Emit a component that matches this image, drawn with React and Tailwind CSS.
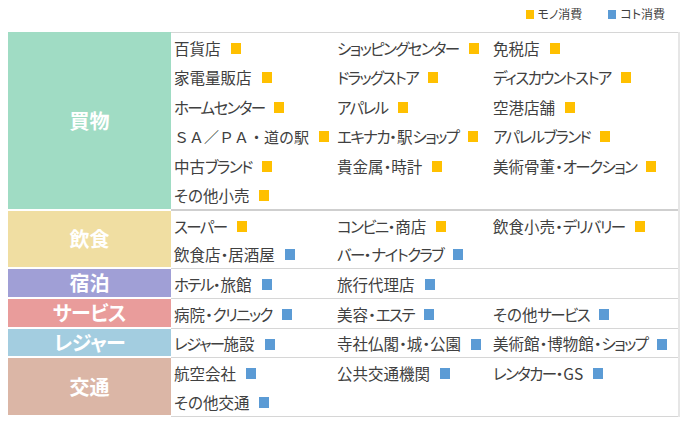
const Y = "bg-[#ffc000]";
const B = "bg-[#5b9bd5]";

const rows = [
  {
    label: "買物",
    color: "bg-[#a0dcc4]",
    h: "h-[179px]",
    line: "h-[29.5px]",
    border: "border-b-2 border-[#cfcfcf]",
    items: [
      ["百貨店", Y], ["ショッピングセンター", Y], ["免税店", Y],
      ["家電量販店", Y], ["ドラッグストア", Y], ["ディスカウントストア", Y],
      ["ホームセンター", Y], ["アパレル", Y], ["空港店舗", Y],
      ["ＳＡ／ＰＡ・道の駅", Y], ["エキナカ・駅ショップ", Y], ["アパレルブランド", Y],
      ["中古ブランド", Y], ["貴金属・時計", Y], ["美術骨董・オークション", Y],
      ["その他小売", Y],
    ],
  },
  {
    label: "飲食",
    color: "bg-[#f0dea2]",
    h: "h-[58px]",
    line: "h-[28.5px]",
    border: "border-b border-[#d6d6d6]",
    items: [
      ["スーパー", Y], ["コンビニ・商店", Y], ["飲食小売・デリバリー", Y],
      ["飲食店・居酒屋", B], ["バー・ナイトクラブ", B],
    ],
  },
  {
    label: "宿泊",
    color: "bg-[#a09fd6]",
    h: "h-[30px]",
    line: "h-[28px]",
    border: "border-b border-[#d6d6d6]",
    items: [["ホテル・旅館", B], ["旅行代理店", B]],
  },
  {
    label: "サービス",
    color: "bg-[#e99c9b]",
    h: "h-[30px]",
    line: "h-[28px]",
    border: "border-b border-[#d6d6d6]",
    items: [["病院・クリニック", B], ["美容・エステ", B], ["その他サービス", B]],
  },
  {
    label: "レジャー",
    color: "bg-[#a3cde0]",
    h: "h-[29px]",
    line: "h-[28px]",
    border: "border-b border-[#d6d6d6]",
    items: [["レジャー施設", B], ["寺社仏閣・城・公園", B], ["美術館・博物館・ショップ", B]],
  },
  {
    label: "交通",
    color: "bg-[#dbb6a6]",
    h: "h-[59px]",
    line: "h-[29px]",
    border: "border-b border-[#d6d6d6]",
    items: [["航空会社", B], ["公共交通機関", B], ["レンタカー・GS", B], ["その他交通", B]],
  },
];

const KANA = /([\u30A1-\u30FA\u30FC]+)/;

// katakana runs are set tighter, like the narrow kana of the original font
function Text({ text, tight = "tracking-[-1.6px]" }) {
  const parts = text.split(KANA).filter(Boolean);
  return (
    <span>
      {parts.map((p, i) =>
        /^[\u30A1-\u30FA\u30FC]+$/.test(p) ? (
          <span key={i} className={tight}>{p}</span>
        ) : (
          <span key={i}>{p}</span>
        )
      )}
    </span>
  );
}

function Item({ text, sq, line }) {
  const full = text.startsWith("ＳＡ");
  return (
    <div className={`${line} flex items-center pl-[3px] pt-[2px] whitespace-nowrap`}>
      {full ? (
        <span className="[font-feature-settings:normal] text-[15px]">{text}</span>
      ) : (
        <Text text={text} />
      )}
      <span className={`inline-block w-[10px] h-[11px] ml-[10px] ${sq}`} />
    </div>
  );
}

export default function App() {
  return (
    <div
      className="w-[695px] h-[422px] bg-white text-[#404040] [font-feature-settings:'palt'] overflow-hidden"
      style={{ fontFamily: '"Noto Sans CJK JP", "Noto Sans", sans-serif' }}
    >
      {/* legend */}
      <div className="h-[32px] flex items-center justify-end pr-[30px] pb-[4px] text-[12px] gap-[26px]">
        <div className="flex items-center gap-[4px]">
          <span className={`w-[8px] h-[9px] ${Y}`} />
          <span>モノ消費</span>
        </div>
        <div className="flex items-center gap-[4px]">
          <span className={`w-[8px] h-[9px] ${B}`} />
          <span>コト消費</span>
        </div>
      </div>

      {/* table */}
      <div className="ml-[8px] w-[672px] border-r-2 border-[#e6e6e6]">
        {rows.map((r, i) => (
          <div key={r.label} className={`flex ${r.h}`}>
            <div
              className={`w-[163px] shrink-0 border-b-2 border-white ${r.color} flex items-center justify-center text-white font-bold text-[20px]`}
            >
              <Text text={r.label} tight="tracking-[-0.5px]" />
            </div>
            <div
              className={`flex-1 ${r.border} ${i === 0 ? "border-t border-t-[#d6d6d6]" : ""} flex items-center text-[15.5px]`}
            >
              <div className="grid grid-cols-[163px_156px_1fr] w-full">
                {r.items.map(([t, sq]) => (
                  <Item key={t} text={t} sq={sq} line={r.line} />
                ))}
              </div>
            </div>
          </div>
        ))}
      </div>
    </div>
  );
}
